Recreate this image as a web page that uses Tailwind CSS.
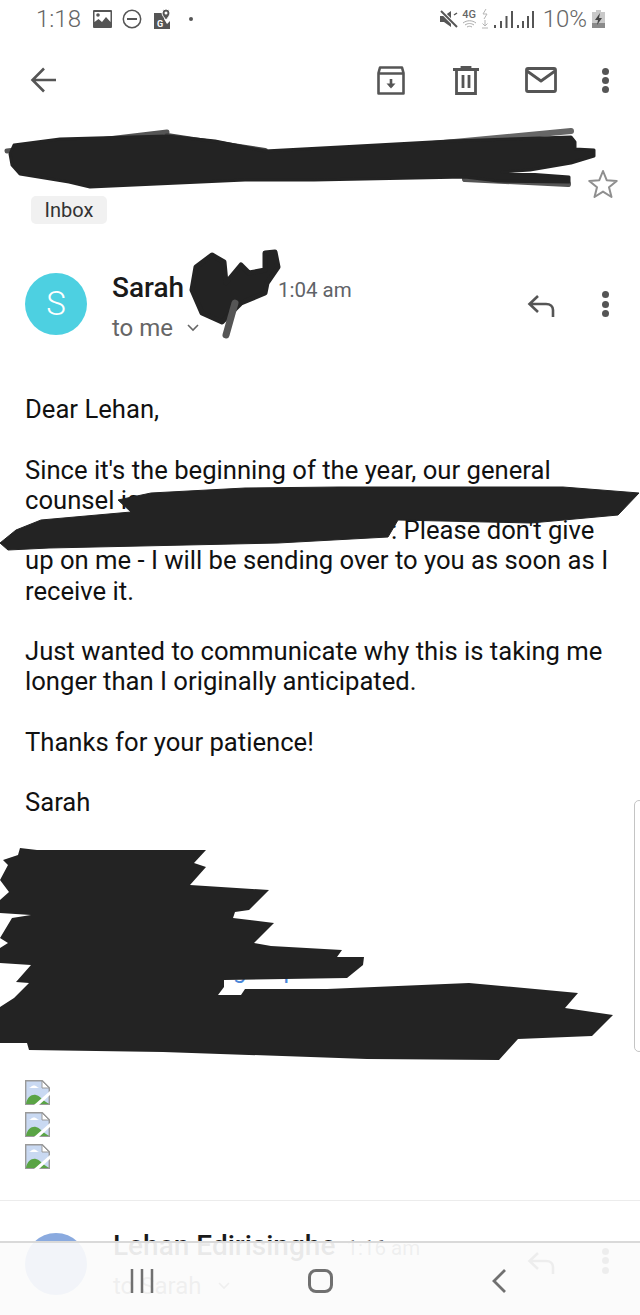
<!DOCTYPE html>
<html lang="en">
<head>
<meta charset="utf-8">
<title>Email</title>
<script src="https://cdn.jsdelivr.net/npm/@tailwindcss/browser@4"></script>
</head>
<body class="bg-white">
<div class="relative w-[640px] h-[1315px] overflow-hidden bg-white font-[Roboto,sans-serif] text-[#1c1c1c]">

    <!-- Status bar -->
    <div class="flex items-center justify-between h-[38px] pl-[36px] pr-[35px] text-[#666]">
        <div class="flex items-center">
            <span class="text-[24px] font-light leading-none w-[57px]">1:18</span>
            <svg viewBox="0 0 19 18" class="w-[19px] h-[18px]" fill="#555">
                <path fill-rule="evenodd" d="M1 0h17a1 1 0 0 1 1 1v16a1 1 0 0 1-1 1H1a1 1 0 0 1-1-1V1a1 1 0 0 1 1-1zM1.500 2v10l4-3 3.500 3 4-5 4.500 5V2z"/>
                <circle cx="5" cy="5" r="1.800"/>
            </svg>
            <svg viewBox="0 0 20 20" class="w-[20px] h-[20px] ml-[10px]" fill="none" stroke="#555" stroke-width="1.500">
                <circle cx="10" cy="10" r="8.700"/><path d="M5 10h10" stroke-width="2"/>
            </svg>
            <svg viewBox="0 0 18 20" class="w-[18px] h-[20px] ml-[11px]">
                <path d="M1 4h10v6l3 5 3-3v8H1z" fill="#555"/>
                <path d="M13 0a4 4 0 0 1 4 4c0 2.500-2.500 5-4 7-1.500-2-4-4.500-4-7a4 4 0 0 1 4-4z" fill="#555" stroke="#fff"/>
                <circle cx="13" cy="4" r="1.500" fill="#fff"/>
                <text x="4" y="18" font-size="9" font-weight="700" fill="#fff" font-family="Roboto">G</text>
            </svg>
            <span class="w-[4px] h-[4px] rounded-full bg-[#555] ml-[18px]"></span>
        </div>
        <div class="flex items-center">
            <svg viewBox="0 0 18 18" class="w-[18px] h-[18px]">
                <path d="M0 6h4l7-5v16l-7-5H0z" fill="#555"/>
                <path d="M1 1l16 16" stroke="#fff" stroke-width="4"/>
                <path d="M1 1l16 16" stroke="#555" stroke-width="2"/>
                <path d="M14 5l3-2" stroke="#555" stroke-width="1.500"/>
            </svg>
            <div class="flex flex-col items-center ml-[4px] w-[15px]">
                <span class="text-[11px] font-medium leading-[10px] text-[#666]">4G</span>
                <svg viewBox="0 0 15 9" class="w-[15px] h-[9px]" fill="none" stroke="#aaa" stroke-width="1">
                    <path d="M1 3c4-3 9-3 13 0M3 5c3-2 6-2 9 0M5 7c2-1 3-1 5 0"/>
                </svg>
            </div>
            <svg viewBox="0 0 8 20" class="w-[8px] h-[20px] ml-[4px]" fill="none" stroke="#b5b5b5" stroke-width="1">
                <path d="M5 0L2 5h4l-3 5" /><path d="M4 11v6M1.500 14.500L4 17l2.500-2.500M1 19h6"/>
            </svg>
            <svg viewBox="0 0 40 18" class="w-[40px] h-[18px] ml-[5px]" fill="#555">
                <rect x="0" y="15" width="2" height="3"/><rect x="6" y="11" width="2" height="7"/><rect x="11.500" y="6" width="2" height="12"/><rect x="17" y="1" width="2" height="17"/>
                <rect x="23" y="15" width="2" height="3"/><rect x="28" y="11" width="2" height="7"/><rect x="33" y="6" width="2" height="12"/><rect x="38" y="1" width="2" height="17"/>
            </svg>
            <span class="text-[24px] font-light leading-none ml-[9px]">10%</span>
            <svg viewBox="0 0 13 18" class="w-[13px] h-[18px] ml-[5px]">
                <path d="M4 0h5v2h4v16H0V2h4z" fill="#c9c9c9"/>
                <rect x="0" y="13" width="13" height="5" fill="#8a8a8a"/>
                <path d="M8 3L3 10h3l-1 5 5-7H7z" fill="#444"/>
            </svg>
        </div>
    </div>

    <!-- Toolbar -->
    <div class="flex items-center h-[84px] pl-[30px] text-[#555]">
        <svg viewBox="0 0 26 26" class="w-[26px] h-[26px]" fill="none" stroke="#555" stroke-width="2.600">
            <path d="M26 13H3M14 1.500L2.500 13 14 24.500"/>
        </svg>
        <svg viewBox="0 0 28 29" class="w-[28px] h-[29px] ml-[321px]" fill="none" stroke="#555" stroke-width="2.600" stroke-linejoin="round">
            <path d="M3 1.500h22L26.500 7v20.500h-25V7zM1.500 7.500h25"/>
            <path d="M14 13v8" stroke-width="2.600"/>
            <path d="M9.500 17.500h9L14 22.500z" fill="#555" stroke="none"/>
        </svg>
        <svg viewBox="0 0 26 29" class="w-[26px] h-[29px] ml-[48px]" fill="none" stroke="#555" stroke-width="2.800">
            <path d="M0 3.500h26M9 3.500V1h8v2.500M3.500 3.500v24h19v-24M10 9v13M16 9v13"/>
        </svg>
        <svg viewBox="0 0 32 26" class="w-[32px] h-[26px] ml-[46px]" fill="none" stroke="#555" stroke-width="2.800" stroke-linejoin="round">
            <rect x="1.500" y="1.500" width="29" height="23" rx="1.500"/><path d="M2 4l14 10L30 4"/>
        </svg>
        <div class="flex flex-col gap-[2px] ml-[45px]">
            <span class="w-[7px] h-[7px] rounded-full bg-[#555]"></span>
            <span class="w-[7px] h-[7px] rounded-full bg-[#555]"></span>
            <span class="w-[7px] h-[7px] rounded-full bg-[#555]"></span>
        </div>
    </div>

    <!-- Subject row, subject line itself is scribbled out -->
    <div class="flex justify-end items-end h-[74px] pr-[22px]">
        <svg viewBox="0 0 30 30" class="w-[30px] h-[30px] -mb-[3px]" fill="none" stroke="#8f8f8f" stroke-width="2" stroke-linejoin="round">
            <path d="M15 2l3.700 9.200 10 .7-7.700 6.300 2.500 9.800L15 22.600 6.500 28l2.500-9.800L1.300 11.900l10-.7z"/>
        </svg>
    </div>
    <div class="ml-[31px] w-[76px] h-[28px] flex items-center justify-center rounded-[5px] bg-[#f1f1f1] text-[20px] leading-none text-[#333]">Inbox</div>

    <!-- Sender -->
    <div class="flex items-start h-[62px] mt-[49px] ml-[25px]">
        <div class="w-[62px] h-[62px] rounded-full bg-[#4dd0e1] flex items-center justify-center text-white text-[33px] font-light">S</div>
        <div class="ml-[25px] w-[415px]">
            <div class="flex items-baseline -mt-[1px] leading-[32px]">
                <span class="text-[28px] font-medium w-[166px] text-[#1a1a1a]">Sarah</span>
                <span class="text-[20.500px] text-[#5f6368]">1:04 am</span>
            </div>
            <div class="flex items-center mt-[7px] text-[24px] leading-[30px] text-[#666]">
                to me
                <svg viewBox="0 0 12 8" class="w-[12px] h-[8px] ml-[14px]" fill="none" stroke="#666" stroke-width="1.600"><path d="M1 1l5 5 5-5"/></svg>
            </div>
        </div>
        <svg viewBox="0 0 28 22" class="w-[28px] h-[22px] mt-[22px]" fill="none" stroke="#555" stroke-width="2.600">
            <path d="M11 1L2.500 9 11 17M3 9h16c4.500 0 7 2.500 7 6v7"/>
        </svg>
        <div class="flex flex-col gap-[2.500px] ml-[47px] mt-[18px]">
            <span class="w-[7px] h-[7px] rounded-full bg-[#555]"></span>
            <span class="w-[7px] h-[7px] rounded-full bg-[#555]"></span>
            <span class="w-[7px] h-[7px] rounded-full bg-[#555]"></span>
        </div>
    </div>

    <!-- Body -->
    <div class="mt-[59px] pl-[25px] text-[25.650px] leading-[30.250px] text-[#111] whitespace-nowrap">
        <p>Dear Lehan,</p>
        <br>
        <p>Since it's the beginning of the year, our general</p>
        <p>counsel is</p>
        <p><span class="inline-block w-[366px]"></span>: Please don't give</p>
        <p>up on me - I will be sending over to you as soon as I</p>
        <p>receive it.</p>
        <br>
        <p>Just wanted to communicate why this is taking me</p>
        <p>longer than I originally anticipated.</p>
        <br>
        <p>Thanks for your patience!</p>
        <br>
        <p>Sarah</p>
    </div>

    <!-- Signature, mostly scribbled out -->
    <div class="h-[262px] pt-[137px] pl-[233px] flex gap-[37px] text-[#4a86d8] text-[24px] leading-[30px]">
        <span>g</span><span>p</span>
    </div>

    <!-- Broken images -->
    <div class="flex flex-col gap-[7px] pl-[25px]">
        <svg viewBox="0 0 25 25" class="w-[25px] h-[25px]">
            <path d="M.7.7h16.600l7 7v16.600H.7z" fill="#c9d9f2" stroke="#9a9a9a" stroke-width="1.400"/>
            <path d="M17 1v7h7z" fill="#fff" stroke="#9a9a9a"/>
            <path d="M6 7c1-2 5-2 6 0l2 1H4z" fill="#fff"/>
            <path d="M1 24c1-7 6-10 10-9 3 .5 5 3 7 5l6 4z" fill="#5aa445"/>
            <path d="M9 25L25 11v4L14 25z" fill="#fff"/>
        </svg>
        <svg viewBox="0 0 25 25" class="w-[25px] h-[25px]">
            <path d="M.7.7h16.600l7 7v16.600H.7z" fill="#c9d9f2" stroke="#9a9a9a" stroke-width="1.400"/>
            <path d="M17 1v7h7z" fill="#fff" stroke="#9a9a9a"/>
            <path d="M6 7c1-2 5-2 6 0l2 1H4z" fill="#fff"/>
            <path d="M1 24c1-7 6-10 10-9 3 .5 5 3 7 5l6 4z" fill="#5aa445"/>
            <path d="M9 25L25 11v4L14 25z" fill="#fff"/>
        </svg>
        <svg viewBox="0 0 25 25" class="w-[25px] h-[25px]">
            <path d="M.7.7h16.600l7 7v16.600H.7z" fill="#c9d9f2" stroke="#9a9a9a" stroke-width="1.400"/>
            <path d="M17 1v7h7z" fill="#fff" stroke="#9a9a9a"/>
            <path d="M6 7c1-2 5-2 6 0l2 1H4z" fill="#fff"/>
            <path d="M1 24c1-7 6-10 10-9 3 .5 5 3 7 5l6 4z" fill="#5aa445"/>
            <path d="M9 25L25 11v4L14 25z" fill="#fff"/>
        </svg>
    </div>

    <div class="mt-[31px] border-t border-[#ececec]"></div>

    <!-- Next message, sits behind the nav bar -->
    <div class="flex items-start h-[62px] mt-[32px] ml-[25px]">
        <div class="w-[62px] h-[62px] rounded-full bg-[#8aaadf]"></div>
        <div class="ml-[26px] w-[414px]">
            <div class="flex items-baseline -mt-[3px] leading-[32px]">
                <span class="text-[28px] font-medium text-[#1a1a1a]">Lehan Edirisinghe</span>
                <span class="text-[20.500px] text-[#5f6368] ml-[11px]">1:16 am</span>
            </div>
            <div class="flex items-center mt-[7px] text-[24px] leading-[30px] text-[#666]">
                to Sarah
                <svg viewBox="0 0 12 8" class="w-[12px] h-[8px] ml-[16px]" fill="none" stroke="#666" stroke-width="1.600"><path d="M1 1l5 5 5-5"/></svg>
            </div>
        </div>
        <svg viewBox="0 0 28 22" class="w-[28px] h-[22px] mt-[19px]" fill="none" stroke="#555" stroke-width="2.600">
            <path d="M11 1L2.500 9 11 17M3 9h16c4.500 0 7 2.500 7 6v7"/>
        </svg>
        <div class="flex flex-col gap-[2.500px] ml-[47px] mt-[15px]">
            <span class="w-[7px] h-[7px] rounded-full bg-[#555]"></span>
            <span class="w-[7px] h-[7px] rounded-full bg-[#555]"></span>
            <span class="w-[7px] h-[7px] rounded-full bg-[#555]"></span>
        </div>
    </div>

    <!-- Scrollbar edge -->
    <div class="absolute left-[634px] top-[800px] w-[10px] h-[252px] border border-[#c4c4c4] rounded-[6px] bg-white"></div>

    <!-- Marker scribbles over the private bits -->
    <svg class="absolute left-0 top-0 w-[640px] h-[1315px] pointer-events-none" viewBox="0 0 640 1315" fill="#232323" stroke-linejoin="round">
        <path d="M7 151L167 132" fill="none" stroke="#555" stroke-width="5" stroke-linecap="round"/>
        <path d="M167 136L265 151" fill="none" stroke="#444" stroke-width="6" stroke-linecap="round"/>
        <path d="M272 159L571 131" fill="none" stroke="#666" stroke-width="6" stroke-linecap="round"/>
        <path d="M465 179L568 184" fill="none" stroke="#555" stroke-width="6" stroke-linecap="round"/>
        <path d="M10 154L14 145L60 139L167 136L215 141L265 151L340 147L450 141L571 137L575 142L575 149L594 150L594 156L571 163L530 170L502 172L569 177L569 182L498 181L465 177L314 180L245 180L90 187L69 182L20 174L12 165z" stroke="#232323" stroke-width="3"/>
        <path d="M196 267L212 255L224 262L226 283L241 265L249 273L265 270L265 253L275 252L278 267L267 283L265 293L241 303L222 322L202 313L192 290z" stroke="#232323" stroke-width="5"/>
        <path d="M235 303L226 335" fill="none" stroke="#555" stroke-width="7" stroke-linecap="round"/>
        <path d="M118 500L151 493L245 488L339 487L563 487L639 493L618 515L531 523L398 520L388 537L278 543L49 548L8 550L0 543L16 530L41 520L131 512z" stroke="#232323"/>
        <path d="M20 848L37 850L206 850L194 863L206 867L190 885L269 890L249 910L235 912L233 918L274 923L254 943L271 946L342 950L337 957L364 957L363 965L347 978L224 980L224 987L218 995L241 995L245 989L327 989L469 983L578 993L565 1008L613 1015L592 1036L518 1039L499 1060L367 1059L163 1052L29 1050L27 1043L0 1043L0 1007L14 998L29 983L16 982L31 965L0 963L0 948L8 943L0 938L12 918L31 915L0 913L0 900L9 892L0 880L8 865L3 860L18 855z"/>
    </svg>

    <!-- Translucent nav bar -->
    <div class="absolute left-0 bottom-0 w-full h-[74px] bg-[#fbfbfb]/92 border-t-2 border-[#d9d9d9]">
        <svg viewBox="0 0 24 24" class="absolute left-[130px] top-[26px] w-[24px] h-[24px]" fill="none" stroke="#707070" stroke-width="2.500"><path d="M2 0v24M12 0v24M22 0v24"/></svg>
        <div class="absolute left-[308px] top-[26px] w-[25px] h-[24px] rounded-[8px] border-[3px] border-[#707070]"></div>
        <svg viewBox="0 0 16 24" class="absolute left-[491px] top-[26px] w-[16px] h-[24px]" fill="none" stroke="#707070" stroke-width="2.800"><path d="M14 1L3 12l11 11"/></svg>
    </div>
</div>
</body>
</html>
